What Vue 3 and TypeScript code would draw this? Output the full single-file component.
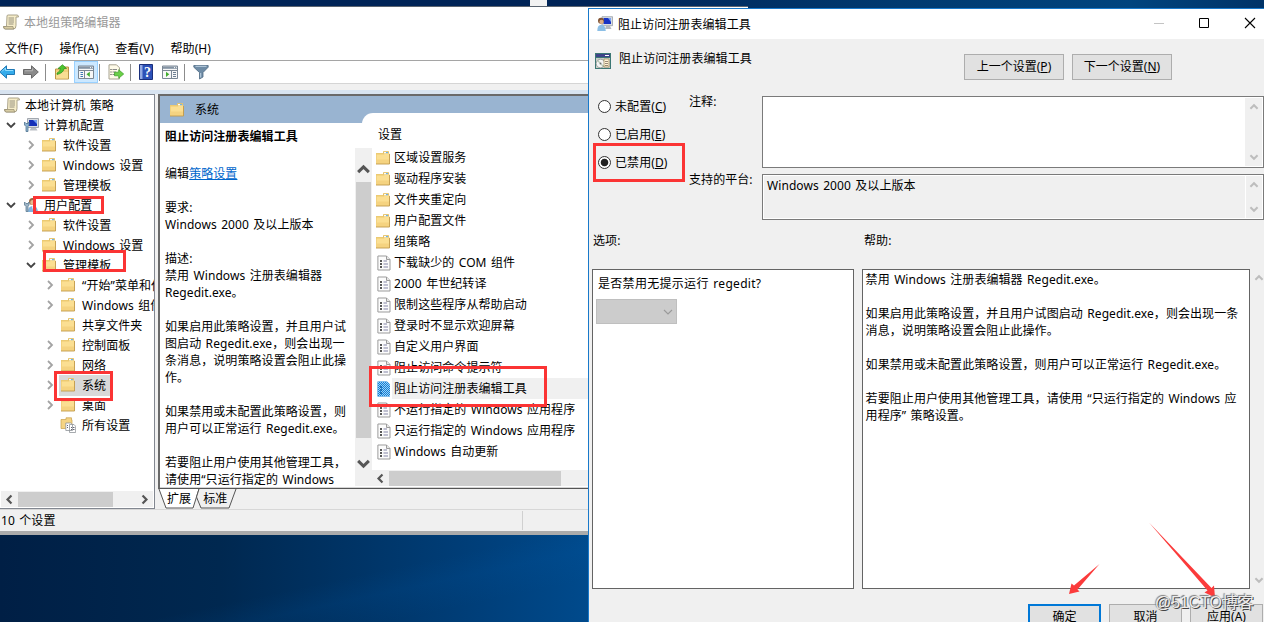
<template>
  <div class="desktop">
    <!-- Shared icons -->
    <svg class="sprites" aria-hidden="true">
      <symbol id="folder" viewBox="0 0 16 16">
        <path d="M1 3h7V1.300h6V3.500h.5v10.500H1z" fill="#ecca72" />
        <path d="M8.500 1.500h5v2h-5z" fill="#e0b85c" />
        <path d="M9 2h4v1.400H9z" fill="#f6fbff" />
        <path d="M11 2.200h2v1h-2z" fill="#3f9be0" />
        <path d="M1.600 4.500H9l1-1h4v9.900H1.600z" fill="#fbdf92" />
        <path d="M1.600 9.500H14v4H1.600z" fill="#f5d380" />
        <path d="M1 14h13.500V4" fill="none" stroke="#c29a49" stroke-width=".9" />
      </symbol>
      <symbol id="scroll" viewBox="0 0 16 16">
        <path d="M4 2q0-1 1.200-1H14q1.500 0 1.500 2H13v8.500Q13 15 10.500 15H2Q.5 15 .5 12.500H3.500z" fill="#f6edc9" stroke="#a29a80" stroke-width=".9" />
        <path d="M3.500 12.500h6.500q0 2 1 2.500H2.500Q.5 14.500.6 12.500z" fill="#d8cda4" stroke="#948b70" stroke-width=".7" />
        <path d="M5.500 4h5.500M5.500 6h5.500M5.500 8h5.500M5.500 10h5" stroke="#8d8878" stroke-width=".9" />
      </symbol>
      <symbol id="computer" viewBox="0 0 16 16">
        <path d="M4.500 1.500h11v9h-11z" fill="#d9dde2" stroke="#8f969e" stroke-width=".8" />
        <path d="M6 3h8v6H6z" fill="#1530b8" />
        <path d="M10 3h4v4z" fill="#6f9bf0" />
        <path d="M8 11h5l1.500 2.500h-8z" fill="#b9bec4" />
        <path d="M1.500 5v3l1.500 1.500v5h2v-5L6 8V5L5 6.500H3z" fill="#8fb3cf" stroke="#4f7390" stroke-width=".8" />
      </symbol>
      <symbol id="user" viewBox="0 0 16 16">
        <circle cx="9.500" cy="4.500" r="3.500" fill="#9a6a42" />
        <circle cx="9.800" cy="5.500" r="2.500" fill="#e5b88e" />
        <path d="M5 15q0-6 4.800-6T15 15z" fill="#7fb2de" />
        <path d="M9 9.300h2L10 13z" fill="#fff" />
        <path d="M1.500 5v3l1.500 1.500v5h2v-5L6 8V5L5 6.500H3z" fill="#9db4c6" stroke="#5d7c92" stroke-width=".8" />
      </symbol>
      <symbol id="userpc" viewBox="0 0 16 16">
        <path d="M5 .7h10.500v9H5z" fill="#d9dde2" stroke="#9aa0a7" stroke-width=".8" />
        <path d="M6.500 2h7.500v6H6.500z" fill="#1733c4" />
        <path d="M11 2h3v4z" fill="#7aa4f5" />
        <path d="M9 10h4l1.500 3H8z" fill="#b5bac0" />
        <circle cx="4" cy="4.800" r="3" fill="#805334" />
        <circle cx="4.500" cy="5.800" r="2.100" fill="#dcae86" />
        <path d="M.3 15q0-6.200 4-6.200T8.800 15z" fill="#8cbfe6" />
      </symbol>
      <symbol id="all" viewBox="0 0 16 16">
        <path d="M1 2.500h5V.8h5.500v2h.5v8.700H1z" fill="#f5d484" stroke="#c7a14d" stroke-width=".7" />
        <path d="M5.800 6h5l1.700 1.700V13.500H5.800zM9.500 7.500h4.500l1.600 1.700v6.300H9.500z" fill="#fff" stroke="#8f9499" stroke-width=".8" />
        <path d="M7 8.500h1M7 10.500h1M11 10.500h1M11 12.500h1M13 10.500h1.500M13 12.500h1.500" stroke="#556" stroke-width=".9" />
      </symbol>
      <symbol id="sheet" viewBox="0 0 14 16">
        <path d="M.9 1h8.600l3.500 3.500v10.500H.9z" fill="#fcfcfc" stroke="#9b9b9b" />
        <path d="M9.500 1v3.500H13" fill="#e7e7e7" stroke="#9b9b9b" />
        <path d="M3 6h2M3 9h2M3 12h2" stroke="#222" stroke-width="1.500" />
        <path d="M6.500 6h3.500M6.500 9h4.500M6.500 12h4.500" stroke="#8283a5" />
      </symbol>
      <symbol id="sheet-on" viewBox="0 0 14 16">
        <path d="M.5.500H10l3 3v12H.5z" fill="#0f7fd8" />
        <path d="M1 1.500h9M1 3.500h11M1 5.500h12M1 7.500h12M1 9.500h12M1 11.500h12M1 13.500h12" stroke="#9fd0f3" stroke-dasharray="1 1" />
        <path d="M2 2.500h9M2 4.500h11M2 6.500h11M2 8.500h11M2 10.500h11M2 12.500h11M2 14.500h11" stroke="#9fd0f3" stroke-dasharray="1 1" />
        <path d="M3 6h2M3 9h2M3 12h2" stroke="#0b5ea8" stroke-width="1.300" />
      </symbol>
      <symbol id="chev" viewBox="0 0 14 14">
        <path d="M2 9.500 7 4.500l5 5" fill="none" stroke="currentColor" stroke-width="2.800" />
      </symbol>
    </svg>

    <div class="peek"></div>

    <!-- Policy editor window -->
    <div class="editor">
      <div class="editor_title"><svg class="ico"><use href="#scroll" /></svg><span>本地组策略编辑器</span></div>
      <div class="menu">
        <span v-for="item in menus" :key="item">{{ item }}</span>
      </div>

      <div class="toolbar">
        <div class="tool">
          <svg class="ico" viewBox="0 0 16 16"><path d="M.7 8 7.500 1.800v3.700h8v5h-8v3.700z" fill="#35abea" stroke="#1f78b5" /><path d="M3 7.500 6.500 4v2.500H14" fill="none" stroke="#8fdcff" /></svg>
        </div>
        <div class="tool">
          <svg class="ico" viewBox="0 0 16 16"><path d="M15.300 8 8.500 1.800v3.700h-8v5h8v3.700z" fill="#8b8b8b" stroke="#696969" /><path d="M2 6.800h7.500V4.500" fill="none" stroke="#b5b5b5" /></svg>
        </div>
        <i class="sep"></i>
        <div class="tool">
          <svg class="ico" viewBox="0 0 16 16"><path d="M1.500 5h7l1-2h5v12h-13z" fill="#f2cf7b" stroke="#b99446" /><path d="M2 8h12v6.500H2z" fill="#f9dd93" /><path d="M3 9Q6 8 6.500 4.500H4L8.500.7l4 3.800H10Q9.500 9 3 10.500z" fill="#4cc42f" stroke="#2b8f1b" stroke-width=".7" /></svg>
        </div>
        <div class="tool tool_on">
          <svg class="ico" viewBox="0 0 16 16"><path d="M.5 2h15v12.500H.5z" fill="#f7f7f7" stroke="#7b8794" /><path d="M1 2.500h14v2.300H1z" fill="#8493a3" /><path d="M12 3.600h1M14 3.600h.8" stroke="#fff" /><path d="M1 6.500h14M6.500 6.500v8" stroke="#7b8794" /><path d="M2.500 8.500h2.500M2.500 10.500h2.500M2.500 12.500h2.500" stroke="#3d78b4" /><path d="M11.800 7.700v5.200L8.500 10.300z" fill="#41ac2e" /></svg>
        </div>
        <i class="sep sep_tight"></i>
        <div class="tool">
          <svg class="ico" viewBox="0 0 16 16"><path d="M1 .8h7.500l3 3V15H1z" fill="#fffbe9" stroke="#a7a290" /><path d="M2.500 5.500h1M2.500 8h1M2.500 10.500h1" stroke="#333" /><path d="M4.500 5.500H9M4.500 8H8M4.500 10.500H8" stroke="#8a8a8a" /><path d="M6.500 8.200h4.200V5.700l5 4.300-5 4.300v-2.500H6.500z" fill="#6ad046" stroke="#3b9a26" stroke-width=".7" /></svg>
        </div>
        <i class="sep"></i>
        <div class="tool tool_help">
          <svg class="ico" viewBox="0 0 16 16"><path d="M1.500.5h13v15h-13z" fill="#2c51b8" stroke="#1a2f7c" /><path d="M2 1h2.500v14H2z" fill="#93a9e2" /><text x="9.500" y="13" class="qmark">?</text></svg>
        </div>
        <div class="tool tool_help">
          <svg class="ico" viewBox="0 0 16 16"><path d="M.5 2h15v12.500H.5z" fill="#f7f7f7" stroke="#7b8794" /><path d="M1 2.500h14v2.300H1z" fill="#8493a3" /><path d="M12 3.600h1M14 3.600h.8" stroke="#fff" /><path d="M1 6.500h14M9.500 6.500v8" stroke="#7b8794" /><path d="M11 8.500h3M11 10.500h3M11 12.500h3" stroke="#6d7f92" /><path d="M4 7.700v5.200l3.300-2.600z" fill="#41ac2e" /></svg>
        </div>
        <i class="sep sep_tight"></i>
        <div class="tool">
          <svg class="ico" viewBox="0 0 16 16"><path d="M.8 1.500h14.400v1.700L10 8.500V13l-3.500 2V8.500L.8 3.200z" fill="#6f8ca6" stroke="#4e6a83" stroke-width=".8" /><path d="M2.500 2.300h11M7.700 9v4.500" stroke="#bed3e4" /></svg>
        </div>
      </div>
      <div class="band"></div>

      <div class="panes">
        <div class="tree">
          <div v-for="node in tree" :key="node.id" class="node" :class="['lv' + node.level, { picked: node.picked }]">
            <svg class="twist" viewBox="0 0 12 12">
              <path v-if="node.open === true" d="M2 4l4 4 4-4" stroke="#444" />
              <path v-if="node.open === false" d="M4 2l4 4-4 4" stroke="#a3a3a3" />
            </svg>
            <svg class="ico"><use :href="'#' + node.icon" /></svg>
            <span>{{ node.label }}</span>
          </div>
          <div class="hbar tree_bar">
            <svg class="arrow left"><use href="#chev" /></svg>
            <i class="tree_thumb"></i>
            <svg class="arrow right"><use href="#chev" /></svg>
          </div>
        </div>

        <div class="result">
          <div class="result_box">
            <div class="result_head"><svg class="ico"><use href="#folder" /></svg><span>系统</span></div>
            <div class="result_body">
              <div class="desc">
                <div class="desc_title">阻止访问注册表编辑工具</div>
                <div class="desc_edit">编辑<a>策略设置</a></div>
                <div v-for="(line, i) in description" :key="i" class="line">{{ line }}</div>
              </div>
              <div class="vbar">
                <svg class="arrow"><use href="#chev" /></svg>
                <i class="desc_thumb"></i>
                <svg class="arrow down"><use href="#chev" /></svg>
              </div>
              <div class="list">
                <div class="list_head">设置</div>
                <div v-for="row in settings" :key="row.label" class="row" :class="{ row_on: row.icon === 'sheet-on' }">
                  <svg :class="row.icon === 'folder' ? 'fold' : 'page'"><use :href="'#' + row.icon" /></svg>
                  <span>{{ row.label }}</span>
                </div>
                <div class="hbar list_bar">
                  <svg class="arrow left"><use href="#chev" /></svg>
                  <i class="list_thumb"></i>
                </div>
              </div>
            </div>
          </div>
          <div class="tabs">
            <svg class="tab_lines" viewBox="0 0 90 21">
              <path d="M1 1 8 20H35L41 1" fill="#fff" stroke="#555" />
              <path d="M41 1 38.500 9 43 20H71L78 1" fill="#f0f0f0" stroke="#555" />
            </svg>
            <span>扩展</span><span>标准</span>
          </div>
        </div>
      </div>
      <div class="status"><span>10 个设置</span><i></i></div>
    </div>

    <!-- Policy setting dialog -->
    <div class="dialog">
      <div class="dialog_title">
        <svg class="ico"><use href="#userpc" /></svg>
        <span>阻止访问注册表编辑工具</span>
        <svg class="caption" viewBox="0 0 104 12">
          <path d="M1 6.500h10" stroke="#c4c4c4" />
          <path d="M46.500 1.500h9v9h-9z" fill="none" stroke="#000" />
          <path d="M92 1l10 10M102 1L92 11" stroke="#000" stroke-width="1.100" />
        </svg>
      </div>

      <div class="dialog_head">
        <svg class="ico" viewBox="0 0 16 16">
          <path d="M0 0h16v16H0z" fill="#3c7774" />
          <path d="M1 1h14v3H1z" fill="#3e4388" />
          <path d="M10 2.500h4" stroke="#fff" />
          <path d="M1 5h14v10H1z" fill="#c9cdc8" />
          <circle cx="5.500" cy="10.500" r="4.300" fill="#f4f4f4" stroke="#8d9490" stroke-width=".8" />
          <path d="M5.500 10.500 2 8.500l1.500-1.700zM5.500 10.500l3.500 2-1.500 1.700z" fill="#b7c7b4" />
          <circle cx="5.500" cy="10.500" r="1" fill="#67716d" />
          <path d="M9 6h5v8H9z" fill="#fff5d8" stroke="#958351" stroke-width=".7" />
          <path d="M10 8.500h3M10 10.500h3M10 12.500h3" stroke="#987" />
        </svg>
        <span class="head_name">阻止访问注册表编辑工具</span>
        <button class="btn">上一个设置(<u>P</u>)</button>
        <button class="btn">下一个设置(<u>N</u>)</button>
      </div>

      <div class="form">
        <div class="radios">
          <label v-for="opt in states" :key="opt.key" @click="state = opt.key">
            <i class="radio" :class="{ checked: state === opt.key }"></i>
            <span>{{ opt.label }}(<u>{{ opt.key }}</u>)</span>
          </label>
        </div>
        <div class="labels">
          <div class="label_note">注释:</div>
          <div>支持的平台:</div>
        </div>
        <div class="fields">
          <div class="field note">
            <span></span>
            <div class="side"><svg><use href="#chev" /></svg><svg class="down"><use href="#chev" /></svg></div>
          </div>
          <div class="field platform">
            <span>Windows 2000 及以上版本</span>
            <div class="side"><svg><use href="#chev" /></svg><svg class="down"><use href="#chev" /></svg></div>
          </div>
        </div>
      </div>

      <div class="captions"><span>选项:</span><span>帮助:</span></div>

      <div class="boxes">
        <div class="box options">
          <div class="question">是否禁用无提示运行 regedit?</div>
          <div class="select"><svg viewBox="0 0 10 6"><path d="M1 1l4 4 4-4" fill="none" stroke="#999" stroke-width="1.100" /></svg></div>
        </div>
        <div class="box help">
          <div v-for="(line, i) in help" :key="i" class="line">{{ line }}</div>
        </div>
        <div class="side help_side"><svg><use href="#chev" /></svg><svg class="down"><use href="#chev" /></svg></div>
      </div>

      <div class="actions">
        <button class="btn primary">确定</button>
        <button class="btn">取消</button>
        <button class="btn">应用(A)</button>
      </div>
    </div>

    <!-- Red annotations -->
    <div class="mark mark_user"></div>
    <div class="mark mark_template"></div>
    <div class="mark mark_system"></div>
    <div class="mark mark_setting"></div>
    <div class="mark mark_disabled"></div>
    <svg class="pointers" viewBox="0 0 284 110">
      <path d="M119.500 54 97.500 79.500l2 2L89 84l2.500-10.500 2.500 2z" fill="#fb3b3b" />
      <path d="M169 12.500 231.500 78l2.500-2.500L235 87.500l-10.500-5 3-2z" fill="#fb3b3b" />
    </svg>
    <div class="watermark">@51CTO博客</div>
  </div>
</template>

<script setup lang="ts">
import { ref } from 'vue';

interface TreeNode {
  id: number;
  level: number;
  icon: string;
  label: string;
  open?: boolean | null;
  picked?: boolean;
}

const menus = ['文件(F)', '操作(A)', '查看(V)', '帮助(H)'];

const tree: TreeNode[] = [
  { id: 1, level: 0, icon: 'scroll', label: '本地计算机 策略', open: null },
  { id: 2, level: 1, icon: 'computer', label: '计算机配置', open: true },
  { id: 3, level: 2, icon: 'folder', label: '软件设置', open: false },
  { id: 4, level: 2, icon: 'folder', label: 'Windows 设置', open: false },
  { id: 5, level: 2, icon: 'folder', label: '管理模板', open: false },
  { id: 6, level: 1, icon: 'user', label: '用户配置', open: true },
  { id: 7, level: 2, icon: 'folder', label: '软件设置', open: false },
  { id: 8, level: 2, icon: 'folder', label: 'Windows 设置', open: false },
  { id: 9, level: 2, icon: 'folder', label: '管理模板', open: true },
  { id: 10, level: 3, icon: 'folder', label: '“开始”菜单和任务栏', open: false },
  { id: 11, level: 3, icon: 'folder', label: 'Windows 组件', open: false },
  { id: 12, level: 3, icon: 'folder', label: '共享文件夹', open: null },
  { id: 13, level: 3, icon: 'folder', label: '控制面板', open: false },
  { id: 14, level: 3, icon: 'folder', label: '网络', open: false },
  { id: 15, level: 3, icon: 'folder', label: '系统', open: false, picked: true },
  { id: 16, level: 3, icon: 'folder', label: '桌面', open: false },
  { id: 17, level: 3, icon: 'all', label: '所有设置', open: null },
];

const description = [
  '要求:',
  'Windows 2000 及以上版本',
  '',
  '描述:',
  '禁用 Windows 注册表编辑器',
  'Regedit.exe。',
  '',
  '如果启用此策略设置，并且用户试',
  '图启动 Regedit.exe，则会出现一',
  '条消息，说明策略设置会阻止此操',
  '作。',
  '',
  '如果禁用或未配置此策略设置，则',
  '用户可以正常运行 Regedit.exe。',
  '',
  '若要阻止用户使用其他管理工具，',
  '请使用“只运行指定的 Windows',
];

const settings = [
  { icon: 'folder', label: '区域设置服务' },
  { icon: 'folder', label: '驱动程序安装' },
  { icon: 'folder', label: '文件夹重定向' },
  { icon: 'folder', label: '用户配置文件' },
  { icon: 'folder', label: '组策略' },
  { icon: 'sheet', label: '下载缺少的 COM 组件' },
  { icon: 'sheet', label: '2000 年世纪转译' },
  { icon: 'sheet', label: '限制这些程序从帮助启动' },
  { icon: 'sheet', label: '登录时不显示欢迎屏幕' },
  { icon: 'sheet', label: '自定义用户界面' },
  { icon: 'sheet', label: '阻止访问命令提示符' },
  { icon: 'sheet-on', label: '阻止访问注册表编辑工具' },
  { icon: 'sheet', label: '不运行指定的 Windows 应用程序' },
  { icon: 'sheet', label: '只运行指定的 Windows 应用程序' },
  { icon: 'sheet', label: 'Windows 自动更新' },
];

const states = [
  { key: 'C', label: '未配置' },
  { key: 'E', label: '已启用' },
  { key: 'D', label: '已禁用' },
];
const state = ref('D');

const help = [
  '禁用 Windows 注册表编辑器 Regedit.exe。',
  '',
  '如果启用此策略设置，并且用户试图启动 Regedit.exe，则会出现一条',
  '消息，说明策略设置会阻止此操作。',
  '',
  '如果禁用或未配置此策略设置，则用户可以正常运行 Regedit.exe。',
  '',
  '若要阻止用户使用其他管理工具，请使用 “只运行指定的 Windows 应',
  '用程序” 策略设置。',
];
</script>

<style>
body {
  overflow: hidden;
}
</style>

<style scoped>
.desktop {
  position: relative;
  width: 1264px;
  height: 622px;
  overflow: hidden;
  font: 12px/17px "Noto Sans", "Noto Sans CJK SC", sans-serif;
  letter-spacing: .07px;
  word-spacing: 1.2px;
  white-space: nowrap;
  color: #000;
  background:
    linear-gradient(168deg, transparent 55%, rgba(0, 90, 170, .12) 66%, transparent 80%) 0 535px / 588px 87px no-repeat,
    linear-gradient(90deg, #001f45 0, #002850 220px, #003f7a 480px, #004a8c 588px) 0 535px / 588px 87px no-repeat,
    linear-gradient(90deg, #002457 0, #002457 600px, #003a70 900px, #00447e 1130px, #003367 1264px);
}

.desktop * {
  box-sizing: border-box;
}

.sprites {
  position: absolute;
  width: 0;
  height: 0;
}

.ico {
  width: 16px;
  height: 16px;
  flex: none;
}

.peek {
  position: absolute;
  left: 530px;
  top: 0;
  width: 17px;
  height: 6px;
  background: #f2f2f2;
}

/* editor */
.editor {
  position: absolute;
  left: 0;
  top: 6px;
  width: 748px;
  height: 529px;
  display: flex;
  flex-direction: column;
  background: #f0f0f0;
  border-top: 1px solid #5b6470;
  border-bottom: 4px solid #ababab;
}

.editor_title {
  height: 30px;
  padding-left: 3px;
  display: flex;
  align-items: center;
  gap: 5px;
  background: #fff;
  color: #999;
}

.menu {
  height: 23px;
  padding-left: 5px;
  display: flex;
  align-items: center;
  gap: 16.6px;
  background: #fff;
}

.toolbar {
  height: 24px;
  display: flex;
  align-items: center;
  background: #fff;
  border-top: 1px solid #a5a5a5;
  border-bottom: 1px solid #d5d5d5;
}

.tool {
  width: 24px;
  height: 22px;
  flex: none;
  display: flex;
  align-items: center;
  justify-content: center;
}

.tool:first-child {
  margin-left: -5px;
}

.tool_on {
  background: #cce8ff;
  border: 1px solid #99d1ff;
}

.tool_help {
  padding-right: 2px;
}

.sep {
  width: 1px;
  height: 17px;
  margin: 0 4px 0 2px;
  background: #8c8c8c;
}

.sep_tight {
  margin-left: 1px;
}

.qmark {
  font: bold 14px "Liberation Serif", serif;
  fill: #fff;
  text-anchor: middle;
}

.band {
  height: 10px;
  border-bottom: 4px solid #d7e3f0;
}

.panes {
  height: 415px;
  display: flex;
  gap: 3px;
}

.tree {
  width: 155px;
  display: flex;
  flex-direction: column;
  overflow: hidden;
  background: #fff;
  border: 1px solid #828790;
  border-left: 0;
}

.node {
  height: 20px;
  flex: none;
  display: flex;
  align-items: center;
}

.node span {
  padding: 0 4px 0 6px;
}

.node .twist {
  width: 12px;
  height: 12px;
  flex: none;
  margin-right: 4px;
}

.twist path {
  fill: none;
  stroke-width: 1.8;
}

.lv0 {
  padding-left: 4px;
}

.lv0 .twist {
  display: none;
}

.lv0 span {
  padding-left: 5px;
}

.lv1 {
  padding-left: 5px;
}

.lv1 .twist {
  margin-right: 6px;
}

.lv1 span {
  padding-left: 5px;
}

.lv2 {
  padding-left: 25px;
}

.lv3 {
  padding-left: 44px;
}

.picked span {
  line-height: 20px;
  padding-top: 1px;
  background: #d9d9d9;
  box-shadow: -17px 0 0 #d9d9d9;
}

.picked .ico {
  position: relative;
  z-index: 1;
}

.hbar {
  height: 16px;
  flex: none;
  display: flex;
  align-items: center;
  background: #f0f0f0;
}

.hbar i {
  height: 15px;
  background: #cdcdcd;
}

.arrow {
  width: 11px;
  height: 11px;
  flex: none;
  color: #555;
}

.left {
  transform: rotate(-90deg);
}

.right {
  transform: rotate(90deg);
}

.down {
  transform: rotate(180deg);
}

.tree_bar {
  margin: auto 1px 1px;
  padding: 0 3px;
}

.tree_thumb {
  width: 95px;
  margin: 0 auto 0 3px;
}

.result {
  width: 590px;
  display: flex;
  flex-direction: column;
}

.result_box {
  height: 395px;
  overflow: hidden;
  background: #fff;
  border: 2px solid #696969;
  border-bottom: 1px solid #555;
}

.result_head {
  height: 27px;
  padding-left: 9px;
  display: flex;
  align-items: center;
  gap: 10px;
  background: #99b4d1;
}

.result_body {
  height: 365px;
  display: flex;
  border-bottom: 1px solid #d4d4d4;
}

.desc {
  width: 195px;
  padding: 5px 0 0 5px;
  overflow: hidden;
}

.desc_title {
  font-weight: bold;
}

.desc_edit {
  padding: 20px 0 17px;
}

.desc_edit a {
  color: #0066cc;
  text-decoration: underline;
}

.line {
  height: 17px;
}

.vbar {
  width: 17px;
  height: 338px;
  margin-top: 25px;
  padding: 14px 0 15px;
  display: flex;
  flex-direction: column;
  align-items: center;
  background: #f0f0f0;
}

.vbar .arrow {
  width: 15px;
  height: 15px;
}

.desc_thumb {
  width: 15px;
  height: 256px;
  margin: 5px 0 auto;
  background: #cdcdcd;
}

.list {
  position: relative;
  flex: 1;
  height: 374px;
  margin: -10px 0 0 -10px;
  padding-left: 10px;
  background: linear-gradient(#fff, #fff) 0 0 / 100% 35px no-repeat;
  border-top-left-radius: 11px;
}

.list_head {
  height: 34px;
  padding: 13px 0 0 6px;
}

.row {
  height: 21px;
  margin-left: 4px;
  display: flex;
  align-items: center;
}

.row span {
  flex: 1;
  padding-left: 2px;
  line-height: 21px;
}

.row_on span {
  background: #f0f0f0;
}

.fold,
.page {
  width: 16px;
  height: 16px;
}

.fold {
  margin: 0 1px 0 -1px;
}

.page {
  width: 14px;
  margin: 0 1px;
}

.list_bar {
  margin-top: 8px;
  padding-left: 3px;
}

.list_thumb {
  width: 172px;
  margin-left: 3px;
}

.tabs {
  position: relative;
  height: 20px;
  padding-left: 9px;
  display: flex;
  gap: 12px;
}

.tabs span {
  position: relative;
  line-height: 20px;
}

.tab_lines {
  position: absolute;
  left: 0;
  top: -1px;
  width: 90px;
  height: 21px;
}

.status {
  height: 22px;
  display: flex;
  align-items: center;
  border-top: 1px solid #d7d7d7;
}

.status span {
  width: 522px;
  padding-left: 1px;
}

.status i {
  width: 1px;
  height: 19px;
  background: #d0d0d0;
}

/* dialog */
.dialog {
  position: absolute;
  left: 588px;
  top: 8px;
  width: 680px;
  height: 640px;
  background: #f0f0f0;
  border: 1px solid #1979ca;
}

.dialog_title {
  height: 30px;
  padding-left: 8px;
  display: flex;
  align-items: center;
  background: #fff;
}

.dialog_title span {
  padding-left: 5px;
}

.caption {
  width: 104px;
  height: 12px;
  margin: -2px 10px 0 auto;
}

.dialog_head {
  height: 57px;
  padding: 14px 0 0 6px;
  display: flex;
  gap: 8px;
}

.head_name {
  width: 337px;
  margin-top: -3px;
}

.btn {
  width: 100px;
  height: 26px;
  margin: 1px 0 0;
  padding: 0 0 1px;
  font: inherit;
  color: #000;
  background: #e1e1e1;
  border: 1px solid #adadad;
}

.form {
  display: flex;
  height: 124px;
}

.radios {
  width: 100px;
  padding-left: 9px;
}

.radios label {
  height: 28px;
  display: flex;
  align-items: center;
}

.radios label:first-child {
  height: 21px;
  margin-bottom: 3px;
}

.radio {
  width: 13px;
  height: 13px;
  margin-right: 4px;
  background: #fff;
  border: 1px solid #333;
  border-radius: 50%;
}

.checked {
  background: radial-gradient(circle, #222 3.4px, #fff 4.2px);
}

.labels {
  width: 73px;
}

.label_note {
  height: 78px;
  margin-top: -3px;
}

.field {
  width: 502px;
  display: flex;
  justify-content: space-between;
  border: 1px solid #7a7a7a;
}

.note {
  height: 72px;
  margin-bottom: 6px;
  padding: 1px;
  background: #fff;
}

.platform {
  height: 46px;
  padding: 1px;
  box-shadow: inset 0 0 0 1px #fff;
}

.platform span {
  padding: 1px 0 0 3px;
}

.side {
  width: 17px;
  padding: 4px 2px;
  display: flex;
  flex-direction: column;
  justify-content: space-between;
  align-items: center;
  background: #f0f0f0;
  color: #bdbdbd;
}

.side svg {
  width: 10px;
  height: 10px;
}

.platform .side {
  border-left: 1px solid #fff;
}

.captions {
  height: 49px;
  padding: 12px 0 0 4px;
  display: flex;
}

.captions span {
  width: 271px;
}

.boxes {
  height: 320px;
  display: flex;
  padding-left: 3px;
}

.box {
  background: #fff;
  border: 1px solid #646464;
}

.options {
  width: 262px;
  margin-right: 8px;
  padding: 5px 3px;
}

.question {
  padding-left: 2px;
  letter-spacing: .3px;
}

.select {
  width: 81px;
  height: 25px;
  margin-top: 7px;
  padding-right: 3px;
  display: flex;
  align-items: center;
  justify-content: flex-end;
  background: #ccc;
  border: 1px solid #bfbfbf;
}

.select svg {
  width: 10px;
  height: 6px;
}

.help {
  width: 389px;
  padding: 1px 3px;
}

.help_side {
  padding: 4px 0;
}

.actions {
  padding: 14px 0 0 439px;
  display: flex;
  gap: 8px;
}

.actions .btn {
  width: 73px;
}

.actions .primary {
  border: 2px solid #0078d7;
}

/* annotations */
.mark {
  position: absolute;
  border: 3px solid #fb3434;
}

.mark_user {
  left: 33px;
  top: 196px;
  width: 71px;
  height: 18px;
}

.mark_template {
  left: 43px;
  top: 250px;
  width: 83px;
  height: 22px;
}

.mark_system {
  left: 54px;
  top: 371px;
  width: 59px;
  height: 30px;
}

.mark_setting {
  left: 369px;
  top: 366px;
  width: 178px;
  height: 41px;
}

.mark_disabled {
  left: 593px;
  top: 143px;
  width: 92px;
  height: 39px;
}

.pointers {
  position: absolute;
  left: 980px;
  top: 510px;
  width: 284px;
  height: 110px;
}

.watermark {
  position: absolute;
  left: 1155px;
  top: 592px;
  font-family: "Liberation Sans", "Noto Sans CJK SC", sans-serif;
  font-size: 16px;
  letter-spacing: -.1px;
  line-height: 22px;
  color: #ececec;
  text-shadow: 1px 1px 0 #444, -1px -1px 1px #777;
}
</style>
